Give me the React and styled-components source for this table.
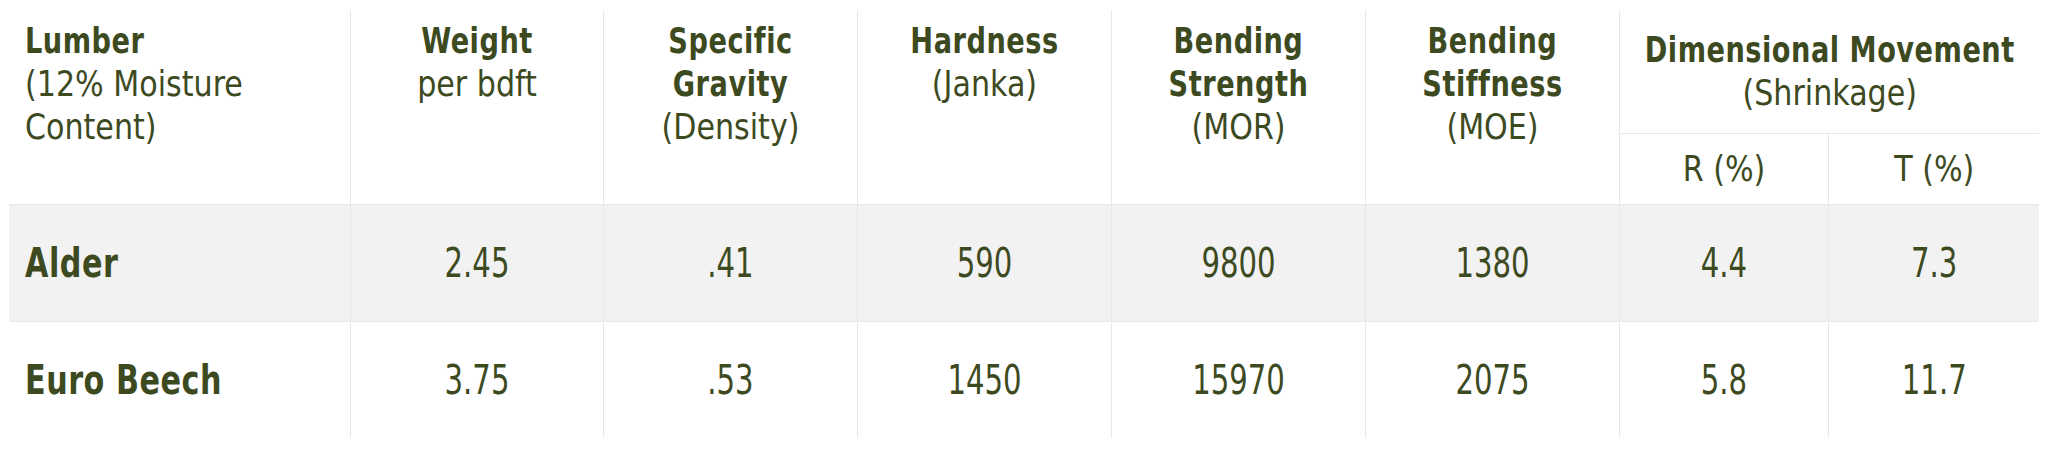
import React from 'react'
import styled, { createGlobalStyle } from 'styled-components'

const GlobalStyle = createGlobalStyle`
  body {
    margin: 0;
    background: #ffffff;
  }
`

const woods = [
    { name: 'Alder', weight: '2.45', gravity: '.41', hardness: '590', mor: '9800', moe: '1380', r: '4.4', t: '7.3' },
    { name: 'Euro Beech', weight: '3.75', gravity: '.53', hardness: '1450', mor: '15970', moe: '2075', r: '5.8', t: '11.7' },
]

// header cells: bold title lines, then the regular sub line
const columns = [
    { title: ['Weight'], sub: 'per bdft' },
    { title: ['Specific', 'Gravity'], sub: '(Density)' },
    { title: ['Hardness'], sub: '(Janka)' },
    { title: ['Bending', 'Strength'], sub: '(MOR)' },
    { title: ['Bending', 'Stiffness'], sub: '(MOE)' },
]

const App = () => {
    return (
        <Page>
            <GlobalStyle />
            <Table>
                <colgroup>
                    <col style={{ width: 341 }} />
                    <col style={{ width: 253 }} />
                    <col style={{ width: 254 }} />
                    <col style={{ width: 254 }} />
                    <col style={{ width: 254 }} />
                    <col style={{ width: 254 }} />
                    <col style={{ width: 209 }} />
                    <col style={{ width: 211 }} />
                </colgroup>
                <thead>
                    <TopRow>
                        <HeadCell rowSpan={2} $left>
                            <Line $left $bold>Lumber</Line>
                            <Line $left>(12% Moisture</Line>
                            <Line $left>Content)</Line>
                        </HeadCell>
                        {columns.map((c) => (
                            <HeadCell rowSpan={2} key={c.sub}>
                                {c.title.map((t) => (
                                    <Line $bold key={t}>{t}</Line>
                                ))}
                                <Line>{c.sub}</Line>
                            </HeadCell>
                        ))}
                        <GroupCell colSpan={2}>
                            <Line $bold>Dimensional Movement</Line>
                            <Line>(Shrinkage)</Line>
                        </GroupCell>
                    </TopRow>
                    <SubRow>
                        <SubCell><Line>R (%)</Line></SubCell>
                        <SubCell><Line>T (%)</Line></SubCell>
                    </SubRow>
                </thead>
                <tbody>
                    {woods.map((w, i) => (
                        <BodyRow key={w.name} $shaded={i % 2 === 0}>
                            <NameCell><Line $left $bold>{w.name}</Line></NameCell>
                            {[w.weight, w.gravity, w.hardness, w.mor, w.moe, w.r, w.t].map((v, j) => (
                                <ValueCell key={j}><Line $scale={0.81}>{v}</Line></ValueCell>
                            ))}
                        </BodyRow>
                    ))}
                </tbody>
            </Table>
        </Page>
    )
}

export default App

const Page = styled.div`
    padding: 10px 9px 0;
    font-family: "DejaVu Sans Condensed", "DejaVu Sans", "Liberation Sans", sans-serif;
    color: #3d4a1f;
`

// the source face is a condensed grotesque; squeeze DejaVu Condensed to its width
const Line = styled.div`
    display: flex;
    justify-content: ${(p) => (p.$left ? 'flex-start' : 'center')};
    white-space: nowrap;
    font-weight: ${(p) => (p.$bold ? 'bold' : 'normal')};
    letter-spacing: ${(p) => (p.$bold ? '0.6px' : '0')};
    transform: scaleX(${(p) => p.$scale || (p.$bold ? 0.84 : 0.93)});
    transform-origin: ${(p) => (p.$left ? 'left center' : 'center center')};
`

const Table = styled.table`
    width: 2030px;
    border-collapse: collapse;
    table-layout: fixed;

    th, td {
        border-left: 1px solid #e8e8e8;
        padding: 0;
    }
    th:first-child, td:first-child {
        border-left: none;
    }
`

const TopRow = styled.tr`
    height: 123px;
`

const SubRow = styled.tr`
    height: 71px;
    border-bottom: 1px solid #e8e8e8;

    th:first-child {
        border-left: 1px solid #e8e8e8 !important;
    }
`

const HeadCell = styled.th`
    vertical-align: top;
    padding: 9px 16px 0 !important;
    font-size: 36px;
    line-height: 43px;
    font-weight: normal;
`

const GroupCell = styled.th`
    vertical-align: middle;
    font-size: 36px;
    line-height: 43px;
    font-weight: normal;
    border-bottom: 1px solid #e8e8e8;
`

const SubCell = styled.th`
    vertical-align: middle;
    font-size: 36px;
    font-weight: normal;
`

const BodyRow = styled.tr`
    height: 117px;
    background: ${(p) => (p.$shaded ? '#f2f2f2' : '#ffffff')};
    border-bottom: ${(p) => (p.$shaded ? '1px solid #e8e8e8' : 'none')};
`

const NameCell = styled.td`
    padding: 0 16px !important;
    font-size: 40px;
    vertical-align: middle;
`

const ValueCell = styled.td`
    font-size: 40px;
    vertical-align: middle;
`
